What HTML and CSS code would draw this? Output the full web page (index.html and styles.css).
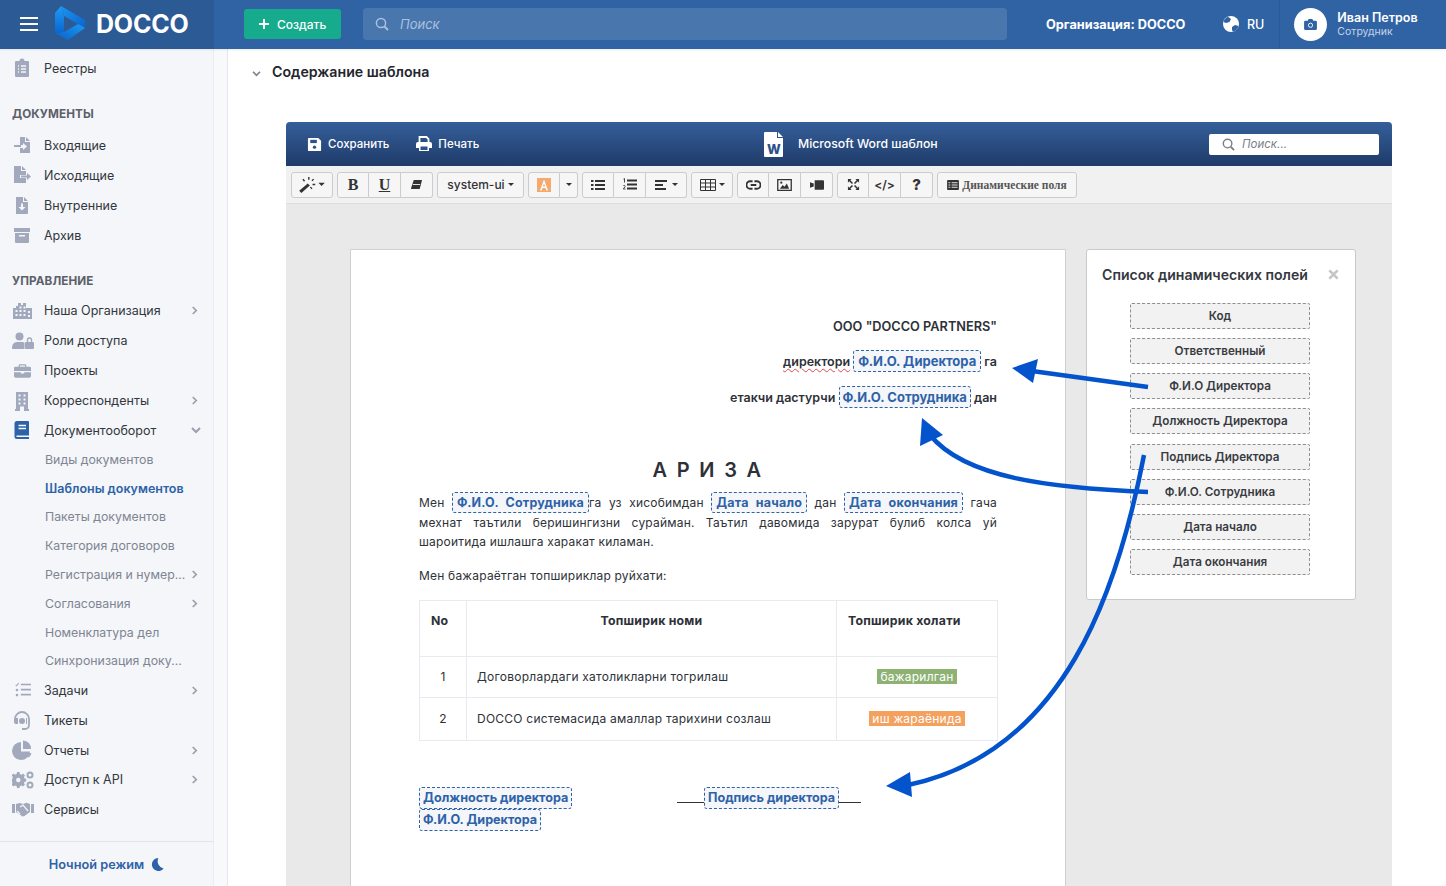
FILE: index.html
```html
<!DOCTYPE html>
<html lang="ru">
<head>
<meta charset="utf-8">
<title>DOCCO</title>
<link rel="stylesheet" href="styles.css">
</head>
<body>
<header class="topbar">
  <div class="brand">
    <button class="burger" aria-label="Меню"><i></i><i></i><i></i></button>
    <svg class="logo" viewBox="0 0 32 36" width="32" height="36">
      <defs>
        <linearGradient id="lg1" x1="0" y1="0" x2="0" y2="1"><stop offset="0" stop-color="#1d9cf6"/><stop offset="1" stop-color="#0b66cf"/></linearGradient>
        <linearGradient id="lg2" x1="0" y1="0" x2="1" y2="1"><stop offset="0" stop-color="#1b95f3"/><stop offset="1" stop-color="#0d63cc"/></linearGradient>
        <linearGradient id="lg3" x1="0" y1="1" x2="1" y2="0"><stop offset="0" stop-color="#0b5fc5"/><stop offset="1" stop-color="#1a9af4"/></linearGradient>
      </defs>
      <polygon points="1,8 7,1 10,11 10,27 1,28" fill="url(#lg1)"/>
      <polygon points="7,1 31,15 31,23 24,19 10,11" fill="url(#lg2)"/>
      <polygon points="31,23 14,35 1,28 10,27 24,19" fill="url(#lg3)"/>
    </svg>
    <span class="brand-name">DOCCO</span>
  </div>
  <div class="topbar-main">
    <button class="create"><svg viewBox="0 0 12 12" width="12" height="12"><path d="M6 1v10M1 6h10" stroke="#fff" stroke-width="2"/></svg>Создать</button>
    <div class="search">
      <svg viewBox="0 0 14 14" width="14" height="14"><circle cx="6" cy="6" r="4.6" fill="none" stroke="#a9c0de" stroke-width="1.5"/><path d="M9.5 9.5 13 13" stroke="#a9c0de" stroke-width="2"/></svg>
      <span>Поиск</span>
    </div>
    <div class="org">Организация: DOCCO</div>
    <div class="lang">
      <svg viewBox="0 0 16 16" width="16" height="16"><circle cx="8" cy="8" r="8" fill="#fff"/><path d="M5 .8 8 3 6.500 6 3 7 .4 6A8 8 0 0 1 5 .8ZM9 11l3-2 3.600 1A8 8 0 0 1 10 15.700L9 14Z" fill="#3063a3"/></svg>
      <span>RU</span>
    </div>
    <div class="user">
      <div class="avatar"><svg viewBox="0 0 14 12" width="13" height="11"><path d="M1.500 2H4l1-2h4l1 2h2.500A1.500 1.500 0 0 1 14 3.500v7a1.500 1.500 0 0 1-1.500 1.500h-11A1.500 1.500 0 0 1 0 10.500v-7A1.500 1.500 0 0 1 1.500 2Z" fill="#3063a3"/><circle cx="7" cy="6.800" r="2.300" fill="none" stroke="#fff" stroke-width="1"/></svg></div>
      <div class="user-text"><b>Иван Петров</b><small>Сотрудник</small></div>
    </div>
  </div>
</header>

<div class="layout">
  <aside class="sidebar">
    <nav class="nav">
      <a class="row"><svg class="ico" viewBox="0 0 20 20"><path d="M4 3h3.500a2.500 2.500 0 0 1 5 0H16a1 1 0 0 1 1 1v14a1 1 0 0 1-1 1H4a1 1 0 0 1-1-1V4a1 1 0 0 1 1-1Z"/><path d="M6 8h1M9 8h5M6 11h1M9 11h5M6 14h1M9 14h5" stroke="#f4f6f9" stroke-width="1.300"/></svg>Реестры</a>

      <h4 class="section lead">ДОКУМЕНТЫ</h4>
      <a class="row"><svg class="ico" viewBox="0 0 20 20"><path d="M8 2h5v5h5v11H8v-5h3v2l4-3.500-4-3.500v2H8ZM14 2l4 4h-4Z"/><path d="M2 10h7v2H2Z"/></svg>Входящие</a>
      <a class="row"><svg class="ico" viewBox="0 0 20 20"><path d="M2 1h7v5h5v4H8v3h6v5H2ZM10 1l4 4h-4Z"/><path d="M9 10.500h6V8l4 3.500-4 3.500v-2.500H9Z"/></svg>Исходящие</a>
      <a class="row"><svg class="ico" viewBox="0 0 20 20"><path d="M4 2h7v5h5v11a1 1 0 0 1-1 1H4ZM12 2l4 4h-4Z"/><path d="M9 8.500h2V12h2.500L10 15.500 6.500 12H9Z" fill="#f4f6f9"/></svg>Внутренние</a>
      <a class="row"><svg class="ico" viewBox="0 0 20 20"><path d="M2 3h16v4H2ZM3 8h14v9a1 1 0 0 1-1 1H4a1 1 0 0 1-1-1Z"/><path d="M7 10h6v1.500H7Z" fill="#f4f6f9"/></svg>Архив</a>

      <h4 class="section">УПРАВЛЕНИЕ</h4>
      <a class="row"><svg class="ico wide" viewBox="0 0 22 18"><path d="M1 6h3V4h2V1h3v2h2V1h3v5h6v11H1Z"/><path d="M3.500 8h2v2h-2ZM7.500 8h2v2h-2ZM11.500 8h2v2h-2ZM16 9h2v2h-2ZM3.500 12h2v2h-2ZM7.500 12h2v2h-2ZM11.500 12h2v2h-2ZM16 13h2v2h-2ZM7.500 4.500h2v2h-2ZM11.500 4.500h2v2h-2Z" fill="#f4f6f9"/></svg>Наша Организация<svg class="chev" viewBox="0 0 8 10"><path d="m2 1 4 4-4 4" fill="none" stroke-width="2"/></svg></a>
      <a class="row"><svg class="ico wide" viewBox="0 0 22 18"><circle cx="7.500" cy="4.500" r="4"/><path d="M1 17c-.7 0-1-.5-1-1 0-4 2.500-6 5-6h5c1 0 2 .3 2.500.8V17Z"/><path d="M14 10h7a1 1 0 0 1 1 1v5a1 1 0 0 1-1 1h-7a1 1 0 0 1-1-1v-5a1 1 0 0 1 1-1Z"/><path d="M15.500 10V8a2 2 0 0 1 4 0v2" fill="none" stroke="#a3a9bd" stroke-width="1.400"/></svg>Роли доступа</a>
      <a class="row"><svg class="ico narrow" viewBox="0 0 20 18"><path d="M7 1h6a1.500 1.500 0 0 1 1.500 1.500V4H18a2 2 0 0 1 2 1v4H0V5a2 2 0 0 1 2-1h3.500V2.500A1.500 1.500 0 0 1 7 1Zm0 1.500V4h6V2.500ZM0 10.500h8V12h4v-1.500h8V15a2 2 0 0 1-2 2H2a2 2 0 0 1-2-2Z" fill-rule="evenodd"/></svg>Проекты</a>
      <a class="row"><svg class="ico" viewBox="0 0 20 20"><path d="M4 1h12v17h1v2H3v-2h1Z"/><path d="M6.500 3.500h2v2h-2ZM11.500 3.500h2v2h-2ZM6.500 7.500h2v2h-2ZM11.500 7.500h2v2h-2ZM6.500 11.500h2v2h-2ZM11.500 11.500h2v2h-2ZM8 15.500h4V20H8Z" fill="#f4f6f9"/></svg>Корреспонденты<svg class="chev" viewBox="0 0 8 10"><path d="m2 1 4 4-4 4" fill="none" stroke-width="2"/></svg></a>
      <a class="row open"><svg class="ico active" viewBox="0 0 20 20"><path d="M5 1h11a1 1 0 0 1 1 1v17H5a2.500 2.500 0 0 1-2.500-2.500v-13A2.500 2.500 0 0 1 5 1Z"/><path d="M6.500 5.500h7.500M6.500 8.500h7.500M4.500 16.200H17" stroke="#f4f6f9" stroke-width="1.500" fill="none"/></svg>Документооборот<svg class="chev down" viewBox="0 0 10 8"><path d="m1 2 4 4 4-4" fill="none" stroke-width="2"/></svg></a>
      <a class="sub">Виды документов</a>
      <a class="sub current">Шаблоны документов</a>
      <a class="sub">Пакеты документов</a>
      <a class="sub">Категория договоров</a>
      <a class="sub">Регистрация и нумер...<svg class="chev" viewBox="0 0 8 10"><path d="m2 1 4 4-4 4" fill="none" stroke-width="2"/></svg></a>
      <a class="sub">Согласования<svg class="chev" viewBox="0 0 8 10"><path d="m2 1 4 4-4 4" fill="none" stroke-width="2"/></svg></a>
      <a class="sub">Номенклатура дел</a>
      <a class="sub">Синхронизация доку...</a>
      <a class="row"><svg class="ico narrow" viewBox="0 0 20 18"><path d="M8 2.500h12M8 8.500h12M8 14.500h12" stroke="#a3a9bd" stroke-width="2" fill="none"/><path d="m2 3 1 1 2.500-3" stroke="#a3a9bd" stroke-width="1.200" fill="none"/><circle cx="3.500" cy="9" r="1.500"/><circle cx="3.500" cy="15" r="1.500"/></svg>Задачи<svg class="chev" viewBox="0 0 8 10"><path d="m2 1 4 4-4 4" fill="none" stroke-width="2"/></svg></a>
      <a class="row"><svg class="ico" viewBox="0 0 20 20"><path d="M3 11V9a7 7 0 0 1 14 0v6a4 4 0 0 1-4 4h-3" fill="none" stroke="#a3a9bd" stroke-width="1.800"/><path d="M4 8h2v6H4a2 2 0 0 1-2-2v-2a2 2 0 0 1 2-2ZM14 8h1v6h-1Z"/><circle cx="10" cy="11" r="3"/></svg>Тикеты</a>
      <a class="row"><svg class="ico" viewBox="0 0 20 20"><path d="M9 2v9.500h9A9 9 0 1 1 9 2Z"/><path d="M11 .5A8 8 0 0 1 19 9h-8ZM11 13h8.500a9 9 0 0 1-2.500 4.500Z"/></svg>Отчеты<svg class="chev" viewBox="0 0 8 10"><path d="m2 1 4 4-4 4" fill="none" stroke-width="2"/></svg></a>
      <a class="row dense"><svg class="ico wide" viewBox="0 0 22 18"><path d="M8 3.200a6 6 0 0 1 1.500.5L11 2.500l2 2-1.100 1.500a6 6 0 0 1 .6 1.500l1.700.3v2.600l-1.700.3a6 6 0 0 1-.6 1.500L13 13.500l-2 2-1.500-1.100a6 6 0 0 1-1.500.6L7.500 17H5l-.4-2a6 6 0 0 1-1.500-.6L1.500 15.500l-2-2 1-1.500a6 6 0 0 1-.5-1.500V8l.5-.5a6 6 0 0 1 .5-1.500L-.5 4.500l2-2 1.600 1.200A6 6 0 0 1 4.600 3L5 1h2.500Z"/><circle cx="6.300" cy="9" r="2.200" fill="#f4f6f9"/><circle cx="18" cy="4" r="2.500" fill="none" stroke="#a3a9bd" stroke-width="2"/><circle cx="18" cy="14" r="2.500" fill="none" stroke="#a3a9bd" stroke-width="2"/></svg>Доступ к API<svg class="chev" viewBox="0 0 8 10"><path d="m2 1 4 4-4 4" fill="none" stroke-width="2"/></svg></a>
      <a class="row"><svg class="ico wide" viewBox="0 0 22 16"><path d="M0 3h3v9H0ZM19 3h3v9h-3ZM4 3l4-1 3 1 3.500-1.200L18 3v8l-1.500 1-4 3-2 .5L5 11.500H4Z"/><path d="m8 6 3-2 5 6M5 10l3 3" stroke="#f4f6f9" stroke-width="1.200" fill="none"/></svg>Сервисы</a>
    </nav>
    <div class="night"><span>Ночной режим</span><svg viewBox="0 0 14 14" width="13" height="13"><path d="M8 0A7 7 0 1 0 13.500 11.300 8 8 0 0 1 8 0Z" fill="#2d62a8"/></svg></div>
  </aside>
  <div class="strip"></div>

  <main class="content">
    <h2 class="page-title"><svg viewBox="0 0 10 8" width="9" height="7"><path d="m1 2 4 4 4-4" fill="none" stroke="#7b8394" stroke-width="2"/></svg>Содержание шаблона</h2>

    <section class="editor">
      <div class="editor-head">
        <div class="head-actions">
          <span class="head-btn"><svg viewBox="0 0 16 16" width="15" height="15"><path d="M2 1h10l3 3v10a1 1 0 0 1-1 1H2a1 1 0 0 1-1-1V2a1 1 0 0 1 1-1Z" fill="#fff"/><path d="M3.500 3h7v3.500h-7Z" fill="#2c5289"/><circle cx="8" cy="10.800" r="1.800" fill="#2c5289"/></svg>Сохранить</span>
          <span class="head-btn"><svg viewBox="0 0 16 16" width="16" height="16"><path d="M3.500 6V1h7l2 2v3" fill="none" stroke="#fff" stroke-width="1.800"/><path d="M2 6h12a2 2 0 0 1 2 2v4h-3v3H3v-3H0V8a2 2 0 0 1 2-2Z" fill="#fff"/><path d="M4.500 10.500h7V14h-7Z" fill="#2c5289"/></svg>Печать</span>
        </div>
        <div class="head-title">
          <svg viewBox="0 0 20 25" width="20" height="25"><path d="M1 0h12v6h6v18a1 1 0 0 1-1 1H1a1 1 0 0 1-1-1V1a1 1 0 0 1 1-1ZM14 0l5 5h-5Z" fill="#fff"/></svg>
          <b class="word-w">W</b>
          <span>Microsoft Word шаблон</span>
        </div>
        <div class="head-search"><svg viewBox="0 0 14 14" width="13" height="13"><circle cx="6" cy="6" r="4.600" fill="none" stroke="#7a7f88" stroke-width="1.500"/><path d="M9.500 9.500 13 13" stroke="#7a7f88" stroke-width="2"/></svg><span>Поиск...</span></div>
      </div>

      <div class="toolbar">
        <div class="group"><button class="tb w42"><svg viewBox="0 0 24 15" width="26" height="16"><path d="m0 13 8-7 2 2-8 7Z" fill="#333"/><path d="M9 0v2.500M13.500 2 12 3.500M15 7h-2.500M3.500 2l1.500 2M12 11l-1.500-1.500" stroke="#333" stroke-width="1.300"/><path d="M18 5.500h6l-3 3Z" fill="#333"/></svg></button></div>
        <div class="group">
          <button class="tb w32 serif">B</button>
          <button class="tb w32 serif und">U</button>
          <button class="tb w32"><svg viewBox="0 0 14 12" width="13" height="11"><path d="M4 1h9l-2.500 10H2a1 1 0 0 1-1-1Z" fill="#333"/><path d="M3 6h8" stroke="#f5f5f5" stroke-width="1"/></svg></button>
        </div>
        <div class="group"><button class="tb w87 fontname">system-ui<i class="caret"></i></button></div>
        <div class="group">
          <button class="tb w32"><svg viewBox="0 0 14 14" width="14" height="14"><rect width="14" height="14" fill="#f4a15f" opacity=".9"/><path d="M7 1.500 11 12.500H9.300L8.500 10h-3l-.8 2.500H3Z M7 5 6 8.500h2Z" fill="#fff" fill-rule="evenodd"/></svg></button>
          <button class="tb w18"><i class="caret"></i></button>
        </div>
        <div class="group">
          <button class="tb w32"><svg viewBox="0 0 14 12" width="14" height="12"><path d="M0 1h2.500v2H0ZM0 5h2.500v2H0ZM0 9h2.500v2H0ZM4 1h10v2H4ZM4 5h10v2H4ZM4 9h10v2H4Z" fill="#333"/></svg></button>
          <button class="tb w32"><svg viewBox="0 0 14 12" width="14" height="13"><path d="M4 1h10v2H4ZM4 5h10v2H4ZM4 9h10v2H4Z" fill="#333"/><path d="M.5 .5 1.500 0v4M.3 7.500c1-1.500 2.500 0 1.500 1L.3 10.500H2.500" fill="none" stroke="#333" stroke-width=".9"/></svg></button>
          <button class="tb w41"><svg viewBox="0 0 14 12" width="14" height="12"><path d="M0 1h12v2H0ZM0 5h8v2H0ZM0 9h11v2H0Z" fill="#333"/></svg><i class="caret"></i></button>
        </div>
        <div class="group"><button class="tb w42"><svg viewBox="0 0 16 12" width="16" height="12"><path d="M.5.500h15v11H.5ZM.5 4h15M.5 8h15M5.500 .5v11M10.500.5v11" fill="none" stroke="#333"/></svg><i class="caret"></i></button></div>
        <div class="group">
          <button class="tb w32"><svg viewBox="0 0 16 10" width="15" height="10"><path d="M7 1H4.500a4 4 0 0 0 0 8H7M9 1h2.500a4 4 0 0 1 0 8H9M5 5h6" fill="none" stroke="#333" stroke-width="2"/></svg></button>
          <button class="tb w32"><svg viewBox="0 0 16 13" width="15" height="12"><path d="M.7.700h14.600v11.600H.7Z" fill="none" stroke="#333" stroke-width="1.400"/><path d="m3 10.500 3-4 2 2 2.500-3.500 2.500 5.500Z" fill="#333"/><circle cx="4.500" cy="4" r="1.200" fill="#333"/></svg></button>
          <button class="tb w32"><svg viewBox="0 0 15 10" width="14" height="10"><path d="M5 0h9a1 1 0 0 1 1 1v8a1 1 0 0 1-1 1H5ZM0 2l4 1.500v3L0 8Z" fill="#333"/></svg></button>
        </div>
        <div class="group">
          <button class="tb w32"><svg viewBox="0 0 14 14" width="13" height="13"><path d="M1 1h4L3.600 2.400 6.500 5.300 5.300 6.500 2.400 3.600 1 5ZM13 1v4l-1.400-1.400-2.900 2.900-1.200-1.200 2.900-2.900L9 1ZM1 13V9l1.400 1.400 2.900-2.900 1.200 1.200-2.900 2.900L5 13ZM13 13H9l1.400-1.400-2.900-2.900 1.200-1.200 2.900 2.900L13 9Z" fill="#333"/></svg></button>
          <button class="tb w32 code">&lt;/&gt;</button>
          <button class="tb w32 help">?</button>
        </div>
        <div class="group"><button class="tb w140 dyn"><svg viewBox="0 0 13 11" width="12" height="10"><path d="M1 0h11a1 1 0 0 1 1 1v9a1 1 0 0 1-1 1H1a1 1 0 0 1-1-1V1a1 1 0 0 1 1-1Z" fill="#333"/><path d="M1.500 3h2M5 3h6.500M1.500 5.500h2M5 5.500h6.500M1.500 8h2M5 8h6.500" stroke="#f5f5f5"/></svg>Динамические поля</button></div>
      </div>

      <div class="editor-body">
        <article class="doc">
          <p class="right company">ООО "DOCCO PARTNERS"</p>
          <p class="right line-a"><span class="misspelt">директори</span> <span class="token">Ф.И.О. Директора</span> га</p>
          <p class="right line-b">етакчи дастурчи <span class="token tight">Ф.И.О. Сотрудника</span> дан</p>
          <h1 class="doc-title">А Р И З А</h1>
          <div class="para">
            <p class="full">Мен <span class="token small">Ф.И.О. Сотрудника</span><span class="after">га</span> уз хисобимдан <span class="token small">Дата начало</span> дан <span class="token small">Дата окончания</span> гача</p>
            <p class="full">мехнат таътили беришингизни сурайман. Таътил давомида зарурат булиб колса уй</p>
            <p>шароитида ишлашга харакат киламан.</p>
          </div>
          <p class="list-title">Мен бажараётган топшириклар руйхати:</p>
          <table class="tasks">
            <colgroup><col class="c1"><col class="c2"><col class="c3"></colgroup>
            <tr class="thead"><th class="left">No</th><th>Топширик номи</th><th class="left">Топширик холати</th></tr>
            <tr class="r1"><td class="mid">1</td><td>Договорлардаги хатоликларни тогрилаш</td><td class="mid"><span class="status done">бажарилган</span></td></tr>
            <tr class="r2"><td class="mid">2</td><td>DOCCO системасида амаллар тарихини созлаш</td><td class="mid"><span class="status prog">иш жараёнида</span></td></tr>
          </table>
          <div class="sign">
            <div class="sign-left"><span class="token sq">Должность директора</span><span class="token sq">Ф.И.О. Директора</span></div>
            <div class="sign-right"><i class="dash d1"></i><span class="token sq">Подпись директора</span><i class="dash d2"></i></div>
          </div>
        </article>

        <aside class="fields">
          <div class="fields-head"><h3>Список динамических полей</h3><svg viewBox="0 0 12 12" width="11" height="11"><path d="m1.500 1.500 9 9M10.500 1.500l-9 9" stroke="#c4c6ca" stroke-width="3"/></svg></div>
          <div class="fields-list">
            <div class="field">Код</div>
            <div class="field">Ответственный</div>
            <div class="field">Ф.И.О Директора</div>
            <div class="field">Должность Директора</div>
            <div class="field">Подпись Директора</div>
            <div class="field">Ф.И.О. Сотрудника</div>
            <div class="field">Дата начало</div>
            <div class="field">Дата окончания</div>
          </div>
        </aside>
      </div>
    </section>
  </main>
</div>

<svg class="arrows" viewBox="0 0 1446 886" width="1446" height="886">
  <path d="M1148 387 1032 371" fill="none" stroke="#0353cc" stroke-width="4.500"/>
  <polygon points="1012,368 1038,359 1033,383" fill="#0353cc"/>
  <path d="M1148 492C1050 488 965 478 930 435" fill="none" stroke="#0353cc" stroke-width="4.500"/>
  <polygon points="922,418 943,435 920,446" fill="#0353cc"/>
  <path d="M1144 455C1118 590 1065 752 908 785" fill="none" stroke="#0353cc" stroke-width="4.500"/>
  <polygon points="886,786 910,772 912,797" fill="#0353cc"/>
</svg>
</body>
</html>
```
FILE: styles.css
```css
* { box-sizing: border-box; }
html, body { height: 100%; }
body {
  margin: 0;
  width: 1446px;
  height: 886px;
  overflow: hidden;
  display: flex;
  flex-direction: column;
  position: relative;
  background: #fff;
  color: #2e3138;
  font-family: Inter, "Noto Sans", sans-serif;
  font-size: 13px;
}
button { font-family: inherit; }
p, h1, h2, h3, h4 { margin: 0; }

/* top bar */
.topbar { height: 49px; flex: none; display: flex; background: #3063a3; color: #fff; box-shadow: 0 1px 2px rgba(0,0,0,.08); z-index: 2; }
.brand { width: 214px; flex: none; display: flex; align-items: center; padding-left: 20px; background: #2c5a94; }
.burger { width: 18px; height: 14px; padding: 0; border: 0; background: none; display: flex; flex-direction: column; justify-content: space-between; margin-right: 16px; margin-top: -2px; }
.burger i { display: block; height: 2px; background: #fff; }
.logo { flex: none; margin-top: -3px; margin-right: 10px; }
.brand-name { font-size: 25px; font-weight: 700; letter-spacing: -.2px; margin-top: -1px; }
.topbar-main { flex: 1; display: flex; align-items: center; padding: 0 0 1px 30px; }
.create { width: 97px; height: 30px; background: #17ab8e; color: #fff; border: 0; border-radius: 3px; font-size: 12px; display: flex; align-items: center; gap: 7px; padding: 0 0 0 14px; font-weight: 500; }
.search { margin-left: 22px; width: 644px; height: 32px; border-radius: 4px; background: #4a76ae; display: flex; align-items: center; gap: 11px; padding-left: 12px; color: #a9c0de; font-style: italic; font-size: 13px; }
.org { margin-left: 39px; font-weight: 700; font-size: 12.750px; white-space: nowrap; width: 140px; }
.lang { margin-left: 37px; display: flex; align-items: center; gap: 8px; font-size: 12.500px; font-weight: 500; }
.user { margin-left: 15px; height: 49px; margin-bottom: -1px; border-left: 1px solid #2c5a94; padding-left: 14px; display: flex; align-items: center; gap: 10px; }
.avatar { width: 33px; height: 33px; border-radius: 50%; background: #fff; display: flex; align-items: center; justify-content: center; }
.user-text { display: flex; flex-direction: column; margin-top: -2px; }
.user-text b { font-size: 12.500px; font-weight: 600; line-height: 15px; }
.user-text small { font-size: 10.500px; line-height: 13px; color: #c3d3e8; }

/* layout */
.layout { flex: 1; display: flex; min-height: 0; }
.sidebar { width: 214px; flex: none; background: #f4f6f9; display: flex; flex-direction: column; border-right: 1px solid #eaecf0; }
.strip { width: 14px; flex: none; background: #f8f9fb; border-right: 1px solid #e4e6ea; }
.nav { flex: 1; padding-top: 4px; }
.row, .sub { display: flex; align-items: center; white-space: nowrap; font-size: 12.500px; }
.row { height: 30px; padding-left: 12px; color: #33363d; }
.row.open { height: 29.500px; }
.row.dense { height: 29px; }
.ico { width: 20px; height: 20px; margin-right: 12px; flex: none; fill: #a3a9bd; }
.ico.wide { width: 22px; margin-right: 10px; }
.ico.narrow { width: 17px; margin: 0 13px 0 2px; }
.ico.active { fill: #2d62a8; }
.chev { width: 7px; height: 9px; margin-left: auto; margin-right: 15px; stroke: #9aa0ad; }
.chev.down { width: 10px; height: 8px; margin-right: 12px; }
.section { height: 30px; margin: 15.500px 0 0; padding-left: 12px; display: flex; align-items: center; font-size: 11.700px; font-weight: 700; color: #5c6068; letter-spacing: .1px; }
.section.lead { margin-bottom: 1.500px; }
.sub { height: 28.800px; padding-left: 45px; color: #7f8593; font-size: 12.350px; }
.sub.current { color: #2d62a8; font-weight: 600; font-size: 12.500px; }
.night { height: 45px; flex: none; border-top: 1px solid #e0e3e8; display: flex; align-items: center; justify-content: center; gap: 7px; color: #2d62a8; font-weight: 600; font-size: 12.750px; }

/* content */
.content { flex: 1; min-width: 0; overflow: hidden; padding-left: 23px; }
.page-title { height: 73px; display: flex; align-items: flex-start; gap: 11px; padding: 14px 0 0 1px; font-size: 14.200px; font-weight: 600; color: #23262c; line-height: 18px; }
.page-title svg { margin-top: 7px; flex: none; }
.editor { margin-left: 35px; width: 1106px; height: 800px; background: #e9e9e9; border-radius: 4px 4px 0 0; }
.editor-head { height: 44px; border-radius: 4px 4px 0 0; background: linear-gradient(#355f9a, #1f3b69); color: #fff; display: flex; align-items: center; position: relative; padding: 0 13px 0 21px; font-size: 11.500px; }
.head-actions { display: flex; gap: 27px; }
.head-btn { display: flex; align-items: center; gap: 6px; font-weight: 500; }
.head-title { position: absolute; left: 478px; top: 10px; display: flex; align-items: center; gap: 14px; font-size: 12.250px; font-weight: 500; }
.head-title span { margin-top: -3px; }
.word-w { position: absolute; left: 3px; top: 9px; font-size: 13px; font-weight: 800; color: #2c5289; }
.head-search { margin-left: auto; width: 170px; height: 21px; border-radius: 2px; background: #fff; color: #7a7f88; font-style: italic; font-size: 11.500px; display: flex; align-items: center; gap: 7px; padding-left: 13px; }
.toolbar { height: 38px; background: #f1f1f1; border-bottom: 1px solid #dcdcdc; display: flex; align-items: center; gap: 4px; padding-left: 5px; }
.group { display: flex; height: 26px; }
.tb { height: 26px; background: #f6f6f6; border: 1px solid #ccc; border-left-width: 0; padding: 0; display: flex; align-items: center; justify-content: center; gap: 3px; color: #333; }
.group .tb:first-child { border-left-width: 1px; border-radius: 3px 0 0 3px; }
.group .tb:last-child { border-radius: 0 3px 3px 0; }
.group .tb:only-child { border-radius: 3px; }
.w18 { width: 18px; } .w32 { width: 32px; } .w41 { width: 41px; } .w42 { width: 42px; } .w87 { width: 87px; } .w140 { width: 140px; }
.caret { width: 0; height: 0; border: 3px solid transparent; border-top: 3px solid #333; border-bottom: 0; display: block; }
.serif { font-family: "Liberation Serif", serif; font-size: 16px; font-weight: 700; }
.und { text-decoration: underline; }
.fontname { font-size: 12px; font-weight: 500; }
.code { font-size: 12px; font-weight: 600; }
.help { font-size: 15px; font-weight: 800; }
.dyn { font-family: "Liberation Serif", serif; font-weight: 700; font-size: 11.500px; color: #555; }
.editor-body { display: flex; align-items: flex-start; padding: 45px 0 0 64px; gap: 20px; }

/* document */
.doc { width: 716px; height: 700px; flex: none; background: #fff; border: 1px solid #d0d0d0; padding: 67px 68px 0; font-size: 12px; line-height: 19px; }
.right { text-align: right; font-weight: 600; font-size: 12.500px; }
.company { line-height: 20px; font-size: 12.750px; }
.line-a { margin-top: 13px; line-height: 22px; }
.line-b { margin-top: 13px; line-height: 22px; }
.misspelt { text-decoration: underline wavy #e0474c 1px; text-underline-offset: 2px; }
.token { display: inline-block; border: 1px dashed #2d62a8; border-radius: 3px; background: #f4f6f9; color: #2d62a8; font-weight: 700; padding: 0 4px; line-height: 20px; font-size: 13px; }
.tight { padding: 0 3px; }
.token.small { display: inline; font-size: 12.500px; padding: 2px 4px; }
.after { margin-left: 0; }
.token.sq { font-size: 12.600px; line-height: 20px; padding: 0 3px; }
.doc-title { margin-top: 47px; height: 37px; text-align: center; font-size: 20px; font-weight: 600; letter-spacing: 2.300px; line-height: 28px; }
.para { letter-spacing: .2px; }
.para .full { text-align: justify; text-align-last: justify; }
.list-title { margin-top: 15px; letter-spacing: .2px; }
.tasks { margin-top: 15px; width: 578px; height: 140px; border-collapse: collapse; table-layout: fixed; letter-spacing: .24px; }
.tasks .c1 { width: 47px; } .tasks .c2 { width: 370px; } .tasks .c3 { width: 161px; }
.tasks th, .tasks td { border: 1px solid #e8eaf0; padding: 0 10px 2px; font-size: 12px; }
.tasks th { vertical-align: top; padding-top: 10px; font-weight: 700; text-align: center; font-size: 12.300px; }
.tasks th.left { text-align: left; padding-left: 11px; }
.thead { height: 56px; } .r1 { height: 41px; } .r2 { height: 43px; }
.mid { text-align: center; }
.status { display: inline-block; color: #fff; line-height: 15px; padding: 0 3px; }
.done { background: #8db274; }
.prog { background: #f4a15f; }
.sign { margin-top: 46px; display: flex; }
.sign-left { width: 258px; display: flex; flex-direction: column; align-items: flex-start; }
.sign-left .token { height: 22px; }
.sign-right { display: flex; align-items: flex-start; }
.sign-right .token { height: 22px; }
.dash { display: block; height: 16px; border-bottom: 1px solid #333; flex: none; }
.d1 { width: 27px; } .d2 { width: 22px; }

/* fields panel */
.fields { width: 270px; height: 351px; flex: none; background: #fff; border: 1px solid #c9c9c9; border-radius: 3px; padding: 14px 15px 0; }
.fields-head { display: flex; align-items: center; justify-content: space-between; height: 20px; padding-right: 1px; }
.fields-head h3 { font-size: 14.100px; font-weight: 600; color: #35383e; white-space: nowrap; }
.fields-list { margin: 19px 0 0 28px; width: 180px; display: flex; flex-direction: column; gap: 9.150px; }
.field { height: 26px; border: 1px dashed #8e8e8e; border-radius: 2px; background: #f2f2f2; display: flex; align-items: center; justify-content: center; font-size: 11.700px; font-weight: 600; color: #383b41; }

/* annotation arrows */
.arrows { position: absolute; left: 0; top: 0; pointer-events: none; z-index: 5; }
```
